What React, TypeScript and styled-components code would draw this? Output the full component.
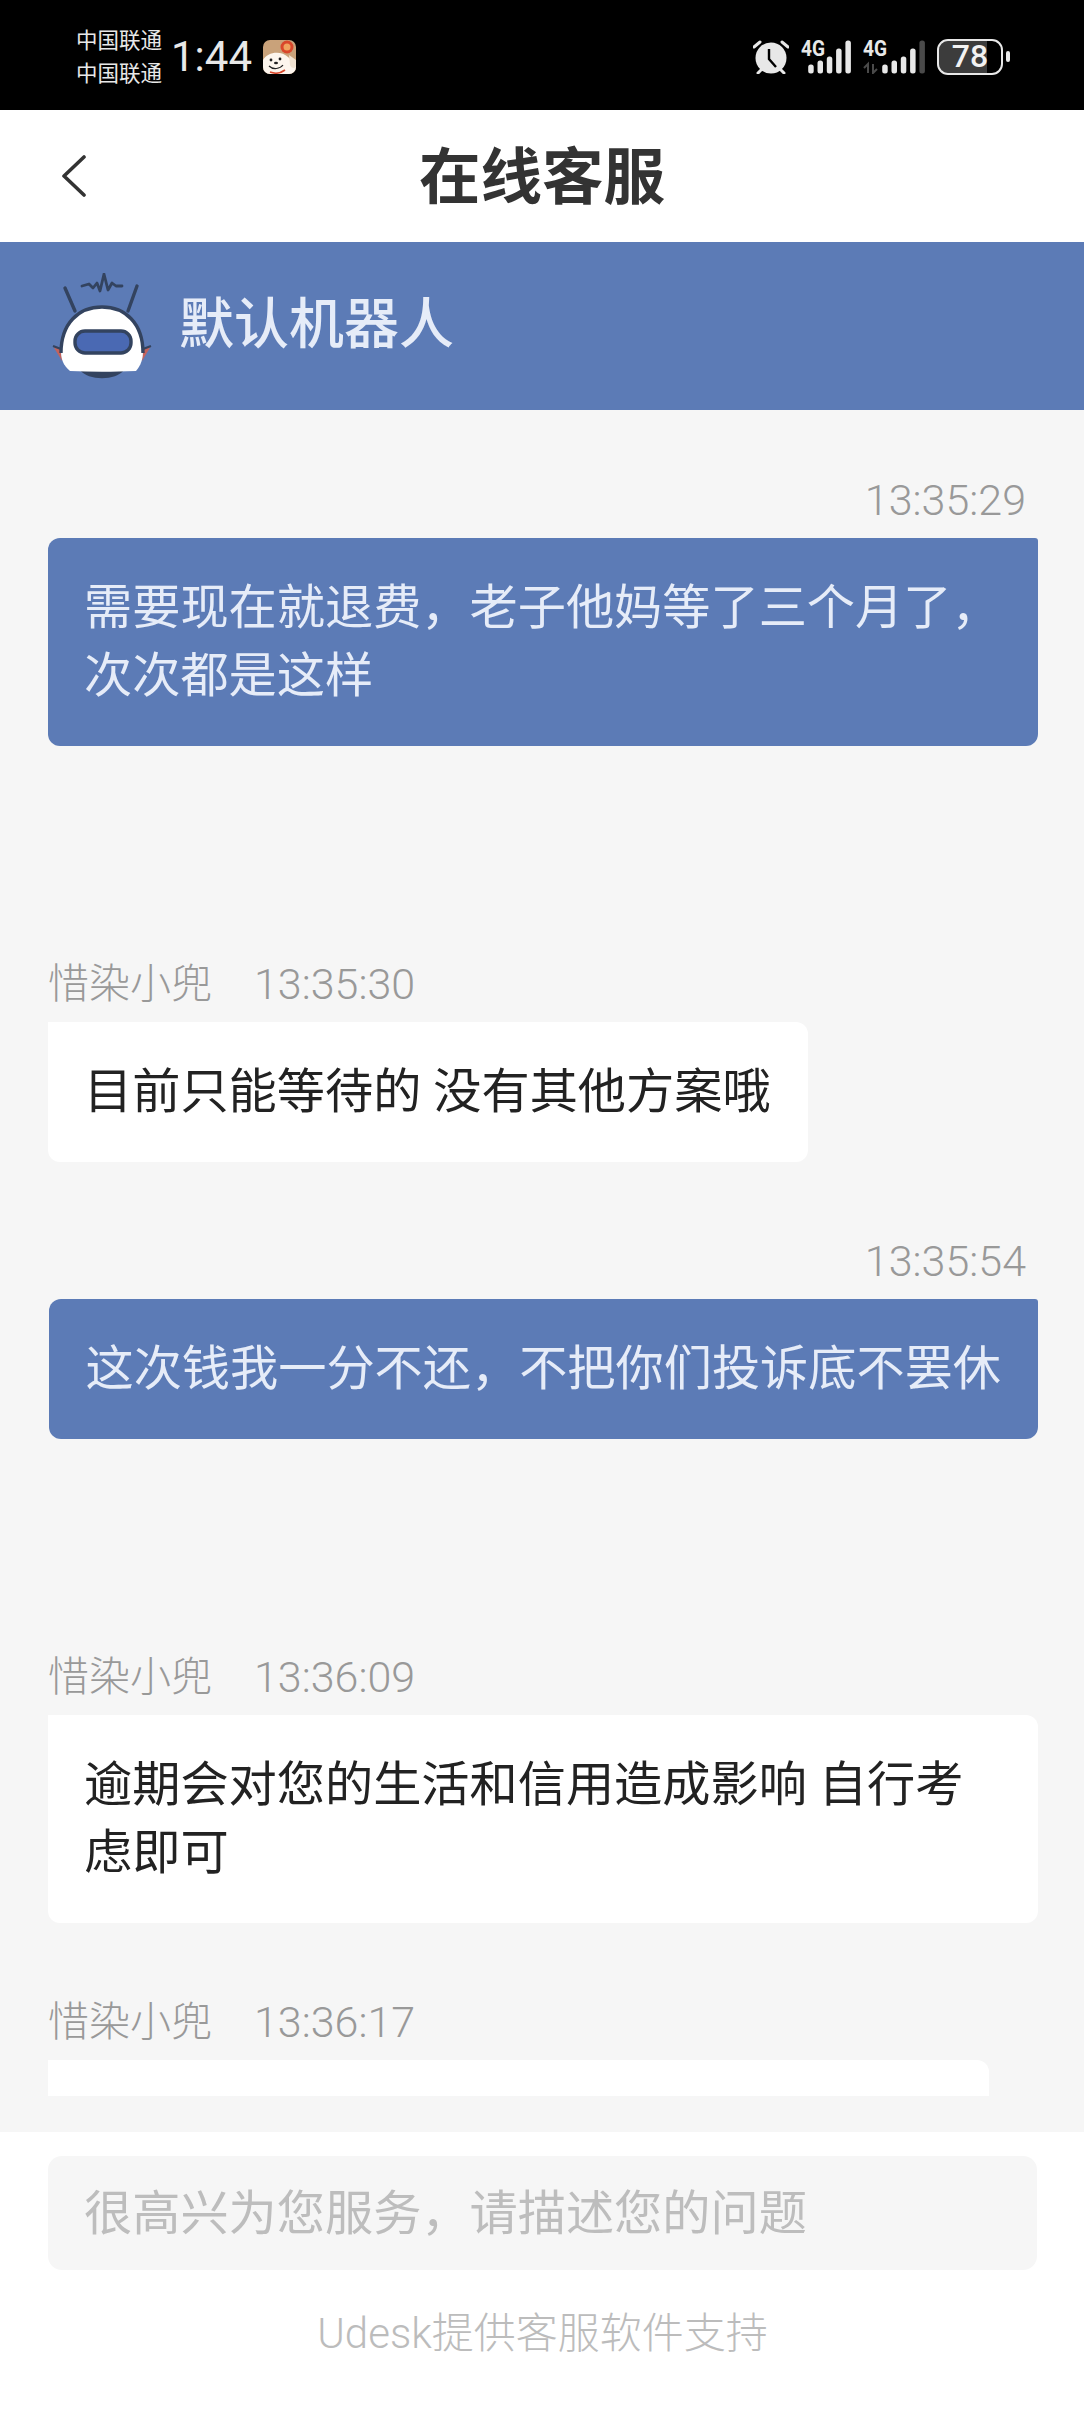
import React from "react";
import styled, { createGlobalStyle } from "styled-components";

const FONT = `"Roboto", "Noto Sans CJK SC", sans-serif`;

type MessageData = {
  from: "me" | "agent";
  time: string;
  name?: string;
  text: string;
  width?: number;
};

const messages: MessageData[] = [
  {
    from: "me",
    time: "13:35:29",
    text: "需要现在就退费，老子他妈等了三个月了，次次都是这样",
  },
  {
    from: "agent",
    name: "惜染小兜",
    time: "13:35:30",
    text: "目前只能等待的 没有其他方案哦",
  },
  {
    from: "me",
    time: "13:35:54",
    text: "这次钱我一分不还，不把你们投诉底不罢休",
  },
  {
    from: "agent",
    name: "惜染小兜",
    time: "13:36:09",
    text: "逾期会对您的生活和信用造成影响 自行考虑即可",
  },
  { from: "agent", name: "惜染小兜", time: "13:36:17", text: "", width: 941 },
];

const GlobalStyle = createGlobalStyle`
  html, body {
    margin: 0;
    padding: 0;
    background: #fff;
    font-family: ${FONT};
  }
  * {
    box-sizing: border-box;
  }
`;

const Page = styled.div`
  width: 1084px;
  height: 2412px;
  display: flex;
  flex-direction: column;
  overflow: hidden;
`;

const StatusBar = styled.div`
  height: 110px;
  flex: none;
  background: #000;
  color: #e8e8e8;
  display: flex;
  justify-content: space-between;
  align-items: center;
  padding: 3px 74px 0 76px;
`;

const StatusLeft = styled.div`
  display: flex;
  align-items: center;
`;

const Carrier = styled.div`
  display: flex;
  flex-direction: column;
  font-size: 21.5px;
  line-height: 33px;
  margin-right: 9px;
`;

const Clock = styled.div`
  font-size: 42px;
  line-height: 50px;
  font-weight: 400;
  margin-right: 11px;
`;

const StatusRight = styled.div`
  display: flex;
  align-items: center;
`;

const StatusIcon = styled.svg<{ $gap: number; $lift?: number }>`
  display: block;
  flex: none;
  margin-right: ${(p) => p.$gap}px;
  margin-top: ${(p) => -(p.$lift ?? 0)}px;
`;

const Battery = styled.div<{ $level: number }>`
  width: 66px;
  height: 36px;
  border: 2.5px solid #e8e8e8;
  border-radius: 11px;
  background: linear-gradient(
    90deg,
    #3c3c3c ${(p) => p.$level}%,
    transparent ${(p) => p.$level}%
  );
  background-clip: padding-box;
  display: flex;
  align-items: center;
  justify-content: center;
  color: #f2f2f2;
  font-size: 32px;
  line-height: 31px;
  font-weight: 500;
`;

const BatteryNub = styled.div`
  width: 4px;
  height: 11px;
  margin-left: 3px;
  border-radius: 2px;
  background: #e8e8e8;
`;

const Header = styled.div`
  height: 132px;
  flex: none;
  background: #fff;
  display: grid;
  grid-template-columns: 1fr auto 1fr;
  align-items: center;
  padding: 0 60px;
`;

const BackIcon = styled.svg`
  display: block;
`;

const Title = styled.div`
  font-size: 61.5px;
  font-weight: 700;
  color: #333;
  margin-bottom: 8px;
`;

const AgentBar = styled.div`
  height: 168px;
  flex: none;
  background: #5c7bb6;
  display: flex;
  align-items: center;
  padding-left: 52px;
`;

const AgentLogo = styled.svg`
  display: block;
  flex: none;
`;

const AgentName = styled.div`
  font-size: 55px;
  font-weight: 500;
  color: #e6ecf8;
  margin: 0 0 14px 27px;
`;

const ChatArea = styled.div`
  flex: none;
  height: 1722px;
  background: #f6f6f6;
  padding-bottom: 36px;
`;

const ChatList = styled.div`
  height: 100%;
  overflow: hidden;
  padding: 67px 46px 0 48px;
  display: flex;
  flex-direction: column;
`;

const Message = styled.div<{ $mine: boolean }>`
  flex: none;
  display: flex;
  flex-direction: column;
  align-items: ${(p) => (p.$mine ? "flex-end" : "flex-start")};
  margin-bottom: ${(p) => (p.$mine ? 215 : 76)}px;
`;

const Meta = styled.div<{ $mine: boolean }>`
  height: 46px;
  margin-bottom: 15px;
  padding-right: ${(p) => (p.$mine ? 12 : 0)}px;
  display: flex;
  gap: 42px;
  font-size: 41px;
  line-height: 46px;
  font-weight: 300;
  color: #999;
`;

const MetaTime = styled.span`
  font-size: 43px;
`;

const Bubble = styled.div<{ $mine: boolean; $width?: number }>`
  width: ${(p) => (p.$width ? `${p.$width}px` : "fit-content")};
  min-height: 139px;
  max-width: 990px;
  padding: 36px 37px 36px 36px;
  font-size: 48.2px;
  line-height: 68px;
  color: ${(p) => (p.$mine ? "#e6ecf8" : "#222")};
  background: ${(p) => (p.$mine ? "#5c7bb6" : "#fff")};
  border-radius: ${(p) => (p.$mine ? "12px 3px 12px 12px" : "0 12px 12px 12px")};
`;

const Footer = styled.div`
  flex: 1;
  background: #fff;
  padding: 24px 47px 0 48px;
  display: flex;
  flex-direction: column;
  align-items: center;
`;

const InputBox = styled.div`
  width: 100%;
  height: 114px;
  flex: none;
  background: #f6f6f6;
  border-radius: 14px;
  display: flex;
  align-items: center;
  padding: 0 0 8px 36px;
  font-size: 48.2px;
  color: #bdbdbd;
`;

const Credit = styled.div`
  margin-top: 39px;
  font-size: 42px;
  line-height: 50px;
  font-weight: 300;
  color: #bcbcbc;
`;

const AppBadge = () => (
  <svg width="33" height="34" viewBox="0 0 33 34">
    <rect width="33" height="34" rx="7" fill="#c9a27a" />
    <path d="M0 20 C4 12 18 10 25 17 L33 24 V27 A7 7 0 0 1 26 34 H7 A7 7 0 0 1 0 27 Z" fill="#fdf6ee" />
    <path d="M26 15 L33 20 V27 C31 29 28 28 27 25 Z" fill="#f1e3d2" />
    <circle cx="24" cy="7" r="6.5" fill="#d9472b" />
    <circle cx="24" cy="7" r="3.5" fill="#f0a35e" />
    <circle cx="8" cy="20" r="1.4" fill="#222" />
    <circle cx="17" cy="19" r="1.4" fill="#222" />
    <ellipse cx="13" cy="23" rx="2" ry="1.3" fill="#222" />
    <path d="M6 26 C10 30 17 29 20 25" fill="none" stroke="#222" strokeWidth="1.2" />
    <path d="M7 32 C12 34 18 33 22 30" fill="none" stroke="#d9472b" strokeWidth="1.6" />
  </svg>
);

const AlarmIcon = () => (
  <StatusIcon $gap={12} width="36" height="34" viewBox="0 0 36 34">
    <circle cx="18" cy="18" r="15.5" fill="#e8e8e8" />
    <path d="M16 9 V19 L23 27" fill="none" stroke="#000" strokeWidth="2.4" />
    <path d="M1 7 L7 2 M35 7 L29 2" stroke="#e8e8e8" strokeWidth="3" strokeLinecap="round" />
    <path d="M5 33 L9 29 M31 33 L27 29" stroke="#e8e8e8" strokeWidth="3" strokeLinecap="round" />
  </StatusIcon>
);

const barHeights = [9, 13, 17, 25, 33];

const SignalIcon = ({ offset, faded }: { offset: number; faded?: boolean }) => (
  <StatusIcon
    $gap={12}
    $lift={6}
    width={offset + 50}
    height="40"
    viewBox={`0 -6 ${offset + 50} 40`}
  >
    <text
      x="0"
      y="16"
      fontSize="22.5"
      fontWeight="700"
      fill="#e8e8e8"
      fontFamily="Roboto, sans-serif"
      textLength="24"
      lengthAdjust="spacingAndGlyphs"
    >
      4G
    </text>
    {barHeights.map((h, i) => (
      <rect
        key={i}
        x={offset + 7.2 + i * 9.3}
        y={33.5 - h}
        width="5.5"
        height={h}
        rx="2.5"
        fill={faded && i === 4 ? "#4a4a4a" : "#e8e8e8"}
      />
    ))}
    {faded && (
      <path d="M1 28 L5 24 V33 M10 24 V33 L14 29" fill="none" stroke="#4a4a4a" strokeWidth="2" />
    )}
  </StatusIcon>
);

const Chevron = () => (
  <BackIcon width="26" height="44" viewBox="0 0 26 44">
    <path d="M24 3 L4 22 L24 41" fill="none" stroke="#333" strokeWidth="3.6" strokeLinecap="round" strokeLinejoin="round" />
  </BackIcon>
);

const RobotLogo = () => (
  <AgentLogo width="100" height="107" viewBox="0 0 100 107">
    <path d="M13 15 L23 38 M85 13 L76 38" stroke="#33435f" strokeWidth="3.4" strokeLinecap="round" />
    <path d="M30 13 L37 11 L41 15 L45 10 L48 18 L52 1 L56 17 L60 10 L64 13 L70 13" fill="none" stroke="#33435f" strokeWidth="2.8" strokeLinejoin="round" strokeLinecap="round" />
    <path d="M1 73 L9 76 L10 88 Z M99 73 L91 76 L90 88 Z" fill="#c3625c" />
    <path d="M1 73 L9 76 M99 73 L91 76" stroke="#33435f" strokeWidth="2.2" />
    <path d="M28 97 C36 108 64 108 72 97 Z" fill="#33435f" />
    <path
      d="M9 78 C9 50 27 34 50 34 C73 34 91 50 91 78 C91 86 89 92 84 98 C60 99 40 99 18 98 C11 92 9 86 9 78 Z"
      fill="#fff"
    />
    <path
      d="M9 80 C9 50 27 34 50 34 C73 34 91 50 91 80"
      fill="none"
      stroke="#33435f"
      strokeWidth="3.4"
    />
    <rect x="23" y="58" width="56" height="22" rx="10" fill="#4a69b3" stroke="#33435f" strokeWidth="3.4" />
  </AgentLogo>
);

const ChatMessage = ({ data }: { data: MessageData }) => {
  const mine = data.from === "me";
  return (
    <Message $mine={mine}>
      <Meta $mine={mine}>
        {data.name && <span>{data.name}</span>}
        <MetaTime>{data.time}</MetaTime>
      </Meta>
      <Bubble $mine={mine} $width={data.width}>
        {data.text}
      </Bubble>
    </Message>
  );
};

export default function App() {
  return (
    <>
      <GlobalStyle />
      <Page>
        <StatusBar>
          <StatusLeft>
            <Carrier>
              <span>中国联通</span>
              <span>中国联通</span>
            </Carrier>
            <Clock>1:44</Clock>
            <AppBadge />
          </StatusLeft>
          <StatusRight>
            <AlarmIcon />
            <SignalIcon offset={0} />
            <SignalIcon offset={12} faded />
            <Battery $level={78}>78</Battery>
            <BatteryNub />
          </StatusRight>
        </StatusBar>
        <Header>
          <Chevron />
          <Title>在线客服</Title>
        </Header>
        <AgentBar>
          <RobotLogo />
          <AgentName>默认机器人</AgentName>
        </AgentBar>
        <ChatArea>
          <ChatList>
            {messages.map((m) => (
              <ChatMessage key={m.time} data={m} />
            ))}
          </ChatList>
        </ChatArea>
        <Footer>
          <InputBox>很高兴为您服务，请描述您的问题</InputBox>
          <Credit>Udesk提供客服软件支持</Credit>
        </Footer>
      </Page>
    </>
  );
}
